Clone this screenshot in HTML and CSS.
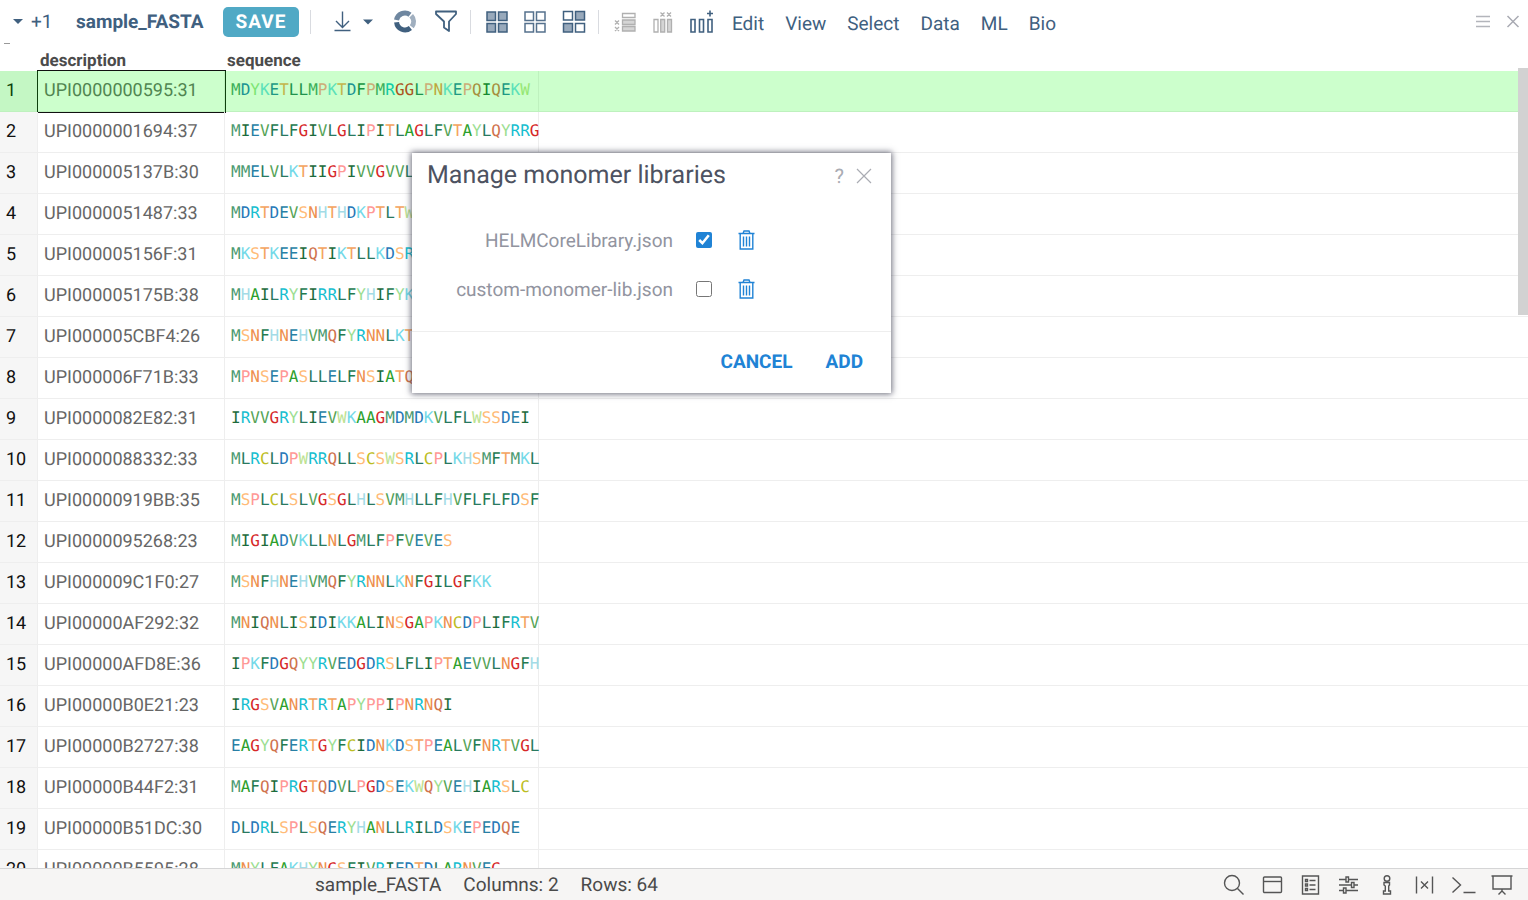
FILE: index.html
```html
<!DOCTYPE html>
<html lang="en">
<head>
<meta charset="utf-8">
<title>sample_FASTA</title>
<link rel="stylesheet" href="styles.css">
</head>
<body>
<div class="app">
  <header class="toolbar">
    <button class="views"><svg width="10" height="6"><path d="M0 0h10L5 5z" fill="#40607f"/></svg>+1</button>
    <h1 class="name">sample_FASTA</h1>
    <button class="save">SAVE</button>
    <span class="sep sep-save"></span>
    <button class="icon download" aria-label="Download"><svg width="40" height="24" fill="none" stroke="#40607f" stroke-width="1.4"><path d="M9.500 1.500v16M3 11l6.500 6.500L16 11M1.500 20.500h16"/><path d="M30 9.500h10l-5 5z" fill="#40607f" stroke="none"/></svg></button>
    <button class="icon chart" aria-label="Add viewer"><svg width="24" height="24" fill="none" stroke-width="5"><path d="M3.500 10A8.500 8.500 0 0 1 17 4.700" stroke="#6f87a0"/><path d="M18.200 5.800A8.500 8.500 0 0 1 18.800 16.800" stroke="#a0afbf"/><path d="M3.600 12.200A8.500 8.500 0 0 0 17.400 18" stroke="#40607f"/></svg></button>
    <button class="icon filter" aria-label="Filter"><svg width="24" height="24" fill="none" stroke="#40607f" stroke-width="1.8" stroke-linejoin="round"><path d="M2 1.500h20v2.500l-7 7.500v9.500l-5-3.500v-6L2 4z"/></svg></button>
    <span class="sep"></span>
    <button class="icon all" aria-label="Select all"><svg width="24" height="24" fill="#98a9bb" stroke="#40607f" stroke-width="1.500"><path d="M2 2h8.500v8.500H2zM13.500 2H22v8.500h-8.500zM2 13.500h8.500V22H2zM13.500 13.500H22V22h-8.500z"/></svg></button>
    <button class="icon none" aria-label="Deselect all"><svg width="24" height="24" fill="#fff" stroke="#55718d" stroke-width="1.500"><path d="M2 2h8.500v8.500H2zM13.500 2H22v8.500h-8.500zM2 13.500h8.500V22H2zM13.500 13.500H22V22h-8.500z"/></svg></button>
    <button class="icon invert" aria-label="Invert selection"><svg width="24" height="24" stroke="#40607f" stroke-width="1.500"><path fill="#fff" d="M1.500 1.500h9v8.500h-9zM13.500 13.500h9V22h-9z"/><path fill="#98a9bb" d="M13.500 1.500h9v8.500h-9zM1.500 13.500h9V22h-9z"/></svg></button>
    <span class="sep"></span>
    <button class="icon rows" aria-label="Delete rows"><svg width="24" height="24" stroke="#b0b0b0" fill="#d5d5d5" stroke-width="1.300"><path fill="#fff" d="M9.500 3.500h12.500v4h-12.500z"/><path d="M9.500 10h12.500v4.500h-12.500zM9.500 16.500h12.500v4.500h-12.500zM2 10.500l4 4m0-4-4 4M2 17l4 4m0-4-4 4"/></svg></button>
    <button class="icon cols" aria-label="Delete columns"><svg width="24" height="24" stroke="#b0b0b0" fill="#d5d5d5" stroke-width="1.300"><path fill="#fff" d="M3 9.500h4v12.500H3z"/><path d="M9.700 9.500h4v12.500h-4zM16.500 9.500h4v12.500h-4zM9.500 2.500l4 4m0-4-4 4M16 2.500l4 4m0-4-4 4"/></svg></button>
    <button class="icon addcol" aria-label="Add column"><svg width="26" height="24" stroke="#40607f" fill="none" stroke-width="1.600"><path d="M2 9.500h4V22H2zM10.500 9.500h4V22h-4zM19 9.500h4V22h-4zM21 .5v6M18 3.500h6"/></svg></button>
    <nav class="menu"><a href="#">Edit</a><a href="#">View</a><a href="#">Select</a><a href="#">Data</a><a href="#">ML</a><a href="#">Bio</a></nav>
    <button class="icon burger" aria-label="Menu"><svg width="16" height="14" stroke="#b3b5bb" stroke-width="1.500"><path d="M1 1.500h14M1 6.500h14M1 11.500h14"/></svg></button>
    <button class="icon close" aria-label="Close"><svg width="14" height="14" stroke="#a9abb3" stroke-width="1.500"><path d="M1.500 1l11 11m0-11-11 11"/></svg></button>
  </header>

  <main class="sheet">
    <span class="corner"></span>
    <table class="grid">
      <thead><tr><th class="num"></th><th class="desc">description</th><th class="seq">sequence</th><th></th></tr></thead>
      <tbody id="rows"></tbody>
    </table>
    <div class="scroll"></div>
    <section class="dialog" role="dialog" aria-labelledby="dialog-title">
      <div class="dialog-head">
        <h2 id="dialog-title">Manage monomer libraries</h2>
        <button class="help" aria-label="Help">?</button>
        <button class="icon" aria-label="Close dialog"><svg width="16" height="16" stroke="#aaacb3" stroke-width="1.200"><path d="M1 1l14 14M15 1L1 15"/></svg></button>
      </div>
      <div class="dialog-body">
        <div class="lib"><label for="helm">HELMCoreLibrary.json</label><input id="helm" type="checkbox" checked><button class="icon" aria-label="Delete HELMCoreLibrary.json"><svg width="17" height="20" fill="none" stroke="#2083d5" stroke-width="1.400"><path d="M.5 3.500h16M5 3.500l1-2.500h5l1 2.500M2.200 3.500v15.500h12.600V3.500M5.500 6.500v10M8.500 6.500v10M11.500 6.500v10"/></svg></button></div>
        <div class="lib"><label for="custom">custom-monomer-lib.json</label><input id="custom" type="checkbox"><button class="icon" aria-label="Delete custom-monomer-lib.json"><svg width="17" height="20" fill="none" stroke="#2083d5" stroke-width="1.400"><path d="M.5 3.500h16M5 3.500l1-2.500h5l1 2.500M2.200 3.500v15.500h12.600V3.500M5.500 6.500v10M8.500 6.500v10M11.500 6.500v10"/></svg></button></div>
      </div>
      <div class="dialog-foot"><button>CANCEL</button><button>ADD</button></div>
    </section>
  </main>

  <footer class="status">
    <span>sample_FASTA</span><span>Columns: 2</span><span>Rows: 64</span>
    <div class="tools">
      <button class="icon" aria-label="Search"><svg width="24" height="24"><circle cx="10" cy="10" r="7.500"/><path d="M15.500 15.500l6 6"/></svg></button>
      <button class="icon" aria-label="Window"><svg width="24" height="24"><rect x="3.500" y="4" width="18" height="15.500" rx="1"/><path d="M3.500 8.500h18"/></svg></button>
      <button class="icon" aria-label="Properties"><svg width="24" height="24"><path d="M4.500 3h16v18h-16zM7.500 6.500h2v2h-2zM7.500 11h2v2h-2zM7.500 15.500h2v2h-2zM11.500 7.500h6M11.500 12h6M11.500 16.500h6"/></svg></button>
      <button class="icon" aria-label="Settings"><svg width="24" height="24"><path d="M3 6.500h7M12.500 6.500H22M3 12h12.500M18 12h4M3 17.500h4.500M10 17.500h12M10 4h2.500v5H10zM15.500 9.500H18v5h-2.500zM7.500 15H10v5H7.500z"/></svg></button>
      <button class="icon" aria-label="Information"><svg width="24" height="24"><circle cx="13" cy="5.500" r="2.800"/><path d="M10 9.500h5.500v2.500l-.8 1v5h1.800v3H9.500v-3h1.800v-5L10 12z"/></svg></button>
      <button class="icon" aria-label="Variables"><svg width="24" height="24"><path d="M4.500 3.500v17M20.500 3.500v17M9 8.500l7 7M16 8.500l-7 7"/></svg></button>
      <button class="icon" aria-label="Console"><svg width="26" height="24"><path d="M2.500 4.500l8 7.500-8 7.500M13.500 19.500h12"/></svg></button>
      <button class="icon" aria-label="Presentation"><svg width="24" height="24"><path d="M1.500 3h21M3 3v13h18V3M12 16v2M8.500 21.500L12 18l3.500 3.500"/></svg></button>
    </div>
  </footer>
</div>
<script src="grid.js"></script>
</body>
</html>
```
FILE: styles.css
```css
* { box-sizing: border-box; }
body { margin: 0; font-family: Roboto, "Noto Sans", sans-serif; color: #4d5261; background: #fff; text-rendering: geometricPrecision; }
button { font: inherit; color: inherit; border: 0; padding: 0; background: none; text-rendering: inherit; }
h1, h2 { margin: 0; }
svg { display: block; }
.app { height: 100vh; display: flex; flex-direction: column; }

.toolbar { height: 43px; flex: none; display: flex; align-items: center; padding: 0 8px 0 13px; color: #40607f; font-size: 19px; }
.views { display: flex; align-items: center; gap: 8px; width: 63px; }
.name { font-size: 19px; font-weight: 700; width: 147px; }
.save { width: 76px; height: 30px; border-radius: 5px; background: #50a9c5; color: #fff; font-weight: 700; letter-spacing: 1px; }
.sep { width: 1px; height: 24px; background: #d9dbe0; margin: 0 14px; }
.sep-save { margin: 0 22px 0 11px; }
.chart { margin-left: 20px; }
.filter { margin-left: 17px; }
.filter + .sep { margin: 0 14px 0 12px; }
.none { margin-left: 14px; }
.invert { margin-left: 15px; }
.invert + .sep { margin-left: 12px; }
.cols, .addcol { margin-left: 14px; }
.menu { display: flex; gap: 21px; margin-left: 17px; padding-top: 4px; }
.menu a { color: inherit; text-decoration: none; }
.burger { margin-left: auto; }
.close { margin-left: 15px; }

.sheet { flex: 1; min-height: 0; position: relative; overflow: hidden; }
.corner { position: absolute; left: 4px; top: 0; width: 6px; height: 1px; background: #999; }
.grid { width: 100%; table-layout: fixed; border-collapse: separate; border-spacing: 0; }
.grid th { height: 28px; padding: 8px 0 0 2px; text-align: left; font-size: 17px; line-height: 20px; color: #4b4b4b; }
.grid .num { width: 38px; }
.grid .desc { width: 187px; }
.grid .seq { width: 314px; }
.grid tbody tr { position: relative; }
.grid td { height: 41px; padding: 0 0 1px 6px; border-right: 1px solid #eee; border-bottom: 1px solid #eee; font-size: 18px; line-height: 24px; color: #666; white-space: nowrap; }
.grid td:last-child { border-right: 0; }
.grid td.num { background: #f6f6f6; color: #111; }
.grid td.seq { padding-bottom: 2px; font-family: "DejaVu Sans Mono", monospace; font-size: 16px; }
.grid tr.current td.num::after { content: ""; position: absolute; inset: 0; background: rgba(0, 255, 0, .2); }
.grid tr.current td.desc { outline: 1px solid #111; }
.scroll { position: absolute; right: 0; top: 25px; width: 10px; height: 247px; background: #d2d2d2; }

.aa-M { color: #4b9a70; } .aa-D { color: #2678b8; } .aa-Y { color: #9cde91; } .aa-K { color: #73d9e8; }
.aa-E { color: #287fa5; } .aa-T { color: #f4a460; } .aa-L { color: #29795f; } .aa-P { color: #ff9896; }
.aa-F { color: #237a50; } .aa-R { color: #17becf; } .aa-G { color: #d62728; } .aa-N { color: #ee8f4d; }
.aa-Q { color: #d0734e; } .aa-I { color: #1c6b3c; } .aa-W { color: #bce292; } .aa-V { color: #55a356; }
.aa-A { color: #2ca02c; } .aa-S { color: #ffbb78; } .aa-H { color: #a3dbe6; } .aa-C { color: #bcbd22; }

.dialog { position: absolute; left: 412px; top: 110px; width: 479px; background: #fff; box-shadow: 0 0 6px 1px rgba(60, 62, 80, .75); }
.dialog-head { display: flex; align-items: center; padding: 0 19px 0 15px; height: 46px; }
.dialog h2 { flex: 1; font-size: 25px; line-height: 32px; font-weight: 400; }
.help { margin-right: 12px; font-size: 20px; color: #aaacb3; }
.dialog-body { display: flex; flex-direction: column; gap: 25px; padding: 29px 15px 30px; }
.lib { display: flex; align-items: center; height: 24px; }
.lib label { width: 246px; text-align: right; font-size: 19px; color: #9294a0; }
.lib input { width: 16px; height: 16px; margin: 0 26px 0 23px; accent-color: #2083d5; }
.dialog-foot { display: flex; justify-content: flex-end; gap: 33px; padding: 18px 28px 19px; border-top: 1px solid #eee; color: #2083d5; font-size: 19px; line-height: 24px; font-weight: 700; }

.status { flex: none; height: 32px; display: flex; align-items: center; gap: 22px; padding: 0 14px 0 315px; border-top: 1px solid #d5d5d6; background: #f6f5f4; font-size: 19px; color: #4a4a4a; }
.tools { margin-left: auto; display: flex; gap: 14px; }
.tools svg { fill: none; stroke: #555; stroke-width: 1.4; }
```
FILE: grid.js
```javascript
const records = [
  ["UPI0000000595:31", "MDYKETLLMPKTDFPMRGGLPNKEPQIQEKW"],
  ["UPI0000001694:37", "MIEVFLFGIVLGLIPITLAGLFVTAYLQYRRG"],
  ["UPI000005137B:30", "MMELVLKTIIGPIVVGVVL"],
  ["UPI0000051487:33", "MDRTDEVSNHTHDKPTLTW"],
  ["UPI000005156F:31", "MKSTKEEIQTIKTLLKDSR"],
  ["UPI000005175B:38", "MHAILRYFIRRLFYHIFYK"],
  ["UPI000005CBF4:26", "MSNFHNEHVMQFYRNNLKT"],
  ["UPI000006F71B:33", "MPNSEPASLLELFNSIATQ"],
  ["UPI0000082E82:31", "IRVVGRYLIEVWKAAGMDMDKVLFLWSSDEI"],
  ["UPI0000088332:33", "MLRCLDPWRRQLLSCSWSRLCPLKHSMFTMKL"],
  ["UPI00000919BB:35", "MSPLCLSLVGSGLHLSVMHLLFHVFLFLFDSF"],
  ["UPI0000095268:23", "MIGIADVKLLNLGMLFPFVEVES"],
  ["UPI000009C1F0:27", "MSNFHNEHVMQFYRNNLKNFGILGFKK"],
  ["UPI00000AF292:32", "MNIQNLISIDIKKALINSGAPKNCDPLIFRTV"],
  ["UPI00000AFD8E:36", "IPKFDGQYYRVEDGDRSLFLIPTAEVVLNGFH"],
  ["UPI00000B0E21:23", "IRGSVANRTRTAPYPPIPNRNQI"],
  ["UPI00000B2727:38", "EAGYQFERTGYFCIDNKDSTPEALVFNRTVGL"],
  ["UPI00000B44F2:31", "MAFQIPRGTQDVLPGDSEKWQYVEHIARSLC"],
  ["UPI00000B51DC:30", "DLDRLSPLSQERYHANLLRILDSKEPEDQE"],
  ["UPI00000B5595:28", "MNYLFAKHYNGSFIVRIEDTDLARNVEG"]
];

document.getElementById("rows").innerHTML = records.map(([id, seq], i) => {
  const letters = [...seq].map(c => `<span class="aa-${c}">${c}</span>`).join("");
  return `<tr${i === 0 ? ' class="current"' : ""}><td class="num">${i + 1}</td><td class="desc">${id}</td><td class="seq">${letters}</td><td></td></tr>`;
}).join("");
```
